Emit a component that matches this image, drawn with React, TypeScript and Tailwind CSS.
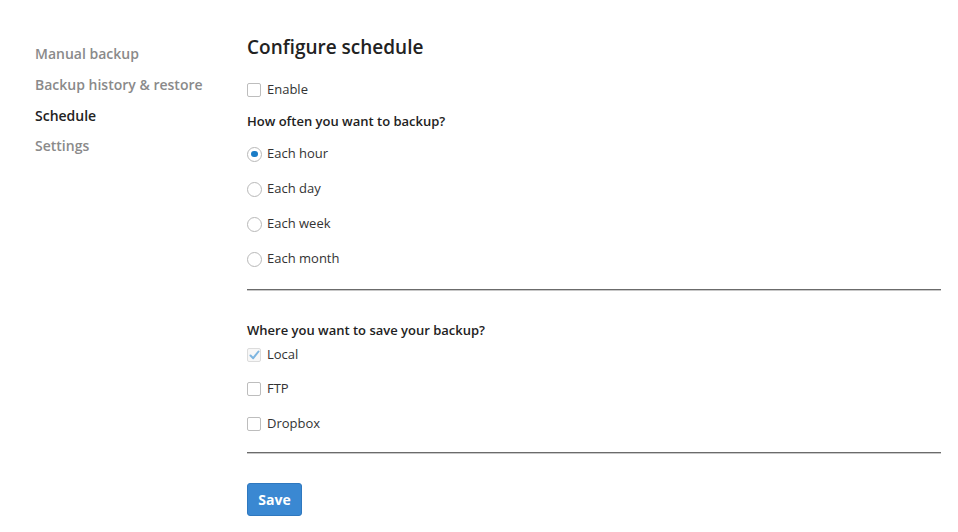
import React from "react";

function Checkbox({ checked = false, label }: { checked?: boolean; label: string }) {
  return (
    <div className="flex items-center h-[20px]">
      <div
        className={
          "w-[14px] h-[14px] rounded-[2px] border flex items-center justify-center " +
          (checked ? "border-[#dcdcdc] bg-[#f7f7f7]" : "border-[#bdbdbd] bg-white")
        }
      >
        {checked && (
          <svg width="11" height="10" viewBox="0 0 11 10">
            <path d="M1.5 5.5 L4.2 8.2 L9.5 1.5" fill="none" stroke="#7db5e0" strokeWidth="2" strokeLinecap="round" strokeLinejoin="round" />
          </svg>
        )}
      </div>
      <span className="ml-[6px] text-[13px] text-[#333]">{label}</span>
    </div>
  );
}

function Radio({ checked = false, label }: { checked?: boolean; label: string }) {
  return (
    <div className="flex items-center h-[20px]">
      <div className="w-[15px] h-[15px] rounded-full border border-[#b8b8b8] bg-white flex items-center justify-center">
        {checked && <div className="w-[7px] h-[6px] rounded-full bg-[#1a7cc6]" />}
      </div>
      <span className="ml-[5px] text-[13px] text-[#333]">{label}</span>
    </div>
  );
}

export default function App() {
  return (
    <div
      className="w-[958px] h-[532px] bg-white flex pl-[35px] pr-[17px] overflow-hidden"
      style={{ fontFamily: '"Open Sans", "Liberation Sans", sans-serif' }}
    >
      <div className="w-[212px] pt-[44px] flex flex-col text-[14px] font-semibold">
        <div className="h-[20px] leading-[20px] text-[#8a8a8a]">Manual backup</div>
        <div className="h-[20px] leading-[20px] text-[#8a8a8a] mt-[11px]">Backup history &amp; restore</div>
        <div className="h-[20px] leading-[20px] text-[#222] mt-[11px]">Schedule</div>
        <div className="h-[20px] leading-[20px] text-[#8a8a8a] mt-[10px]">Settings</div>
      </div>
      <div className="flex-1 pt-[33px] flex flex-col">
        <h1 className="h-[28px] leading-[28px] text-[19px] font-semibold text-[#222]">Configure schedule</h1>
        <div className="mt-[19px]">
          <Checkbox label="Enable" />
        </div>
        <div className="mt-[11px] h-[20px] leading-[20px] text-[13px] font-semibold text-[#222]">
          How often you want to backup?
        </div>
        <div className="mt-[13px] flex flex-col gap-[15px]">
          <Radio checked label="Each hour" />
          <Radio label="Each day" />
          <Radio label="Each week" />
          <Radio label="Each month" />
        </div>
        <div className="mt-[20px] h-px bg-[#6b6b6b]" />
        <div className="h-px bg-[#c8c8c8]" />
        <div className="mt-[29px] h-[20px] leading-[20px] text-[13px] font-semibold text-[#222]">
          Where you want to save your backup?
        </div>
        <div className="mt-[5px]">
          <Checkbox checked label="Local" />
        </div>
        <div className="mt-[14px]">
          <Checkbox label="FTP" />
        </div>
        <div className="mt-[15px]">
          <Checkbox label="Dropbox" />
        </div>
        <div className="mt-[18px] h-px bg-[#6b6b6b]" />
        <div className="h-px bg-[#c8c8c8]" />
        <div className="mt-[29px]">
          <button className="w-[55px] h-[33px] rounded-[3px] bg-[#3a88d2] border border-[#2f78bf] text-white text-[14px] font-bold">
            Save
          </button>
        </div>
      </div>
    </div>
  );
}
